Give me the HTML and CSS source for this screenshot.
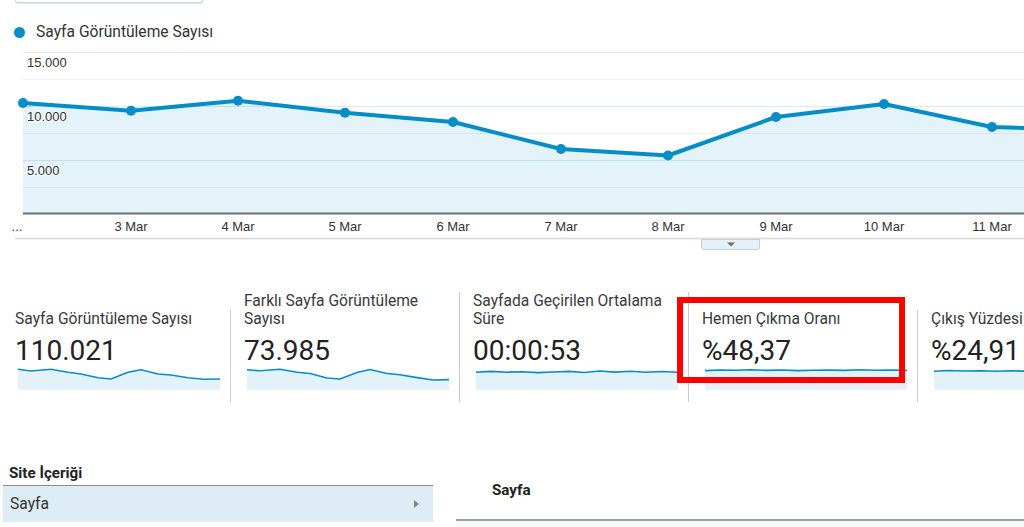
FILE: index.html
```html
<!DOCTYPE html>
<html lang="tr">
<head>
<meta charset="utf-8">
<title>Analytics</title>
<link rel="stylesheet" href="styles.css">
</head>
<body>
<div class="page">
  <div class="topbox"></div>

  <div class="legend">
    <span class="legend-dot"></span>
    <span class="legend-text">Sayfa Görüntüleme Sayısı</span>
  </div>

  <svg class="chart" width="1024" height="206" viewBox="0 44 1024 206" xmlns="http://www.w3.org/2000/svg">
    <g class="grid-major">
      <line x1="23" y1="52.5" x2="1024" y2="52.5"/>
      <line x1="23" y1="106.5" x2="1024" y2="106.5"/>
      <line x1="23" y1="160.5" x2="1024" y2="160.5"/>
    </g>
    <g class="grid-minor">
      <line x1="23" y1="79.5" x2="1024" y2="79.5"/>
      <line x1="23" y1="133.5" x2="1024" y2="133.5"/>
      <line x1="23" y1="187.5" x2="1024" y2="187.5"/>
    </g>
    <polygon class="area" points="23,103 131,110.7 238,100.7 345,112.7 453,122 561,149 668,155.5 776,117 884,104 992,127 1024,128 1024,213 23,213"/>
    <g class="ylabels">
      <text x="27" y="67">15.000</text>
      <text x="27" y="121">10.000</text>
      <text x="27" y="175">5.000</text>
    </g>
    <polyline class="series" points="23,103 131,110.7 238,100.7 345,112.7 453,122 561,149 668,155.5 776,117 884,104 992,127 1024,128"/>
    <g class="dots">
      <circle cx="23" cy="103" r="5"/>
      <circle cx="131" cy="110.7" r="5"/>
      <circle cx="238" cy="100.7" r="5"/>
      <circle cx="345" cy="112.7" r="5"/>
      <circle cx="453" cy="122" r="5"/>
      <circle cx="561" cy="149" r="5"/>
      <circle cx="668" cy="155.5" r="5"/>
      <circle cx="776" cy="117" r="5"/>
      <circle cx="884" cy="104" r="5"/>
      <circle cx="992" cy="127" r="5"/>
    </g>
    <line class="axis" x1="23" y1="213.5" x2="1024" y2="213.5"/>
    <g class="xlabels">
      <text x="17" y="231" text-anchor="start">...</text>
      <text x="131" y="231">3 Mar</text>
      <text x="238" y="231">4 Mar</text>
      <text x="345" y="231">5 Mar</text>
      <text x="453" y="231">6 Mar</text>
      <text x="561" y="231">7 Mar</text>
      <text x="668" y="231">8 Mar</text>
      <text x="776" y="231">9 Mar</text>
      <text x="884" y="231">10 Mar</text>
      <text x="992" y="231">11 Mar</text>
    </g>
    <line class="chart-bottom" x1="15" y1="238.5" x2="1024" y2="238.5"/>
    <path class="tab" d="M701.5,239.5 H759.5 V247 Q759.5,249.5 757,249.5 H704 Q701.5,249.5 701.5,247 Z"/>
    <polygon class="tab-arrow" points="727,242.5 735,242.5 731,246.5"/>
  </svg>

  <div class="metrics">
    <div class="metric">
      <div class="metric-title">Sayfa Görüntüleme Sayısı</div>
      <div class="metric-value">110.021</div>
      <svg class="spark" width="202" height="22" viewBox="0 0 202 22">
        <polygon class="spark-area" points="0,1.3 13,3 33,1.3 50,4.3 63,6 80,9.7 93,11 110,4.3 123,1.7 140,6 153,7 170,9.7 186,11.3 202,11 202,22 0,22"/>
        <polyline class="spark-line" points="0,1.3 13,3 33,1.3 50,4.3 63,6 80,9.7 93,11 110,4.3 123,1.7 140,6 153,7 170,9.7 186,11.3 202,11"/>
      </svg>
    </div>
    <div class="metric">
      <div class="metric-title">Farklı Sayfa Görüntüleme Sayısı</div>
      <div class="metric-value">73.985</div>
      <svg class="spark" width="202" height="22" viewBox="0 0 202 22">
        <polygon class="spark-area" points="0,1.8 13,2.8 33,1.3 50,4.3 63,5.5 80,10 93,11 110,4.5 123,1.5 140,5.5 153,6.8 170,9.6 186,12 202,11.6 202,22 0,22"/>
        <polyline class="spark-line" points="0,1.8 13,2.8 33,1.3 50,4.3 63,5.5 80,10 93,11 110,4.5 123,1.5 140,5.5 153,6.8 170,9.6 186,12 202,11.6"/>
      </svg>
    </div>
    <div class="metric">
      <div class="metric-title">Sayfada Geçirilen Ortalama Süre</div>
      <div class="metric-value">00:00:53</div>
      <svg class="spark" width="202" height="22" viewBox="0 0 202 22">
        <polygon class="spark-area" points="0,4.3 15,3.4 31,4.2 46,3.8 62,4.6 77,4 93,3.4 108,4.5 124,3 139,4.1 155,3.3 170,4.3 186,3.5 202,4.2 202,22 0,22"/>
        <polyline class="spark-line" points="0,4.3 15,3.4 31,4.2 46,3.8 62,4.6 77,4 93,3.4 108,4.5 124,3 139,4.1 155,3.3 170,4.3 186,3.5 202,4.2"/>
      </svg>
    </div>
    <div class="metric">
      <div class="metric-title">Hemen Çıkma Oranı</div>
      <div class="metric-value">%48,37</div>
      <svg class="spark" width="202" height="22" viewBox="0 0 202 22">
        <polygon class="spark-area" points="0,2.6 15,2 31,2.3 46,1.8 62,2.4 77,2 93,2.6 108,2.2 124,2 139,2.4 155,1.8 170,2.2 186,2 202,2.4 202,22 0,22"/>
        <polyline class="spark-line" points="0,2.6 15,2 31,2.3 46,1.8 62,2.4 77,2 93,2.6 108,2.2 124,2 139,2.4 155,1.8 170,2.2 186,2 202,2.4"/>
      </svg>
    </div>
    <div class="metric">
      <div class="metric-title">Çıkış Yüzdesi</div>
      <div class="metric-value">%24,91</div>
      <svg class="spark" width="202" height="22" viewBox="0 0 202 22">
        <polygon class="spark-area" points="0,3.2 15,2.5 31,3 46,2.7 62,3.3 77,2.8 93,3.2 108,2.6 124,3.1 139,2.7 155,3.2 170,2.8 186,3.1 202,2.8 202,22 0,22"/>
        <polyline class="spark-line" points="0,3.2 15,2.5 31,3 46,2.7 62,3.3 77,2.8 93,3.2 108,2.6 124,3.1 139,2.7 155,3.2 170,2.8 186,3.1 202,2.8"/>
      </svg>
    </div>
  </div>

  <div class="highlight"></div>

  <div class="content">
    <div class="dims">
      <div class="dims-title">Site İçeriği</div>
      <div class="dims-row">
        <span>Sayfa</span>
        <span class="row-arrow"></span>
      </div>
    </div>
    <div class="table">
      <div class="table-head">Sayfa</div>
      <div class="table-body"></div>
    </div>
  </div>
</div>
</body>
</html>
```

FILE: styles.css
```css
html, body {
  margin: 0;
  padding: 0;
  background: #ffffff;
}

.page {
  position: relative;
  width: 1024px;
  height: 527px;
  overflow: hidden;
  font-family: Roboto, "Liberation Sans", Arial, sans-serif;
  color: #333333;
}

.topbox {
  margin-left: 15px;
  width: 186px;
  height: 2px;
  border: 1px solid #c9d5dd;
  border-top: none;
  border-radius: 0 0 4px 4px;
  box-shadow: 0 1px 1px rgba(180, 200, 212, 0.5);
}

.legend {
  display: flex;
  align-items: center;
  margin-top: 20px;
  padding-left: 14px;
  height: 18px;
  gap: 11px;
}

.legend-dot {
  width: 11px;
  height: 11px;
  border-radius: 50%;
  background: #058dc7;
}

.legend-text {
  font-size: 15.6px;
  line-height: 18px;
  color: #333333;
}

.chart {
  display: block;
  margin-top: 3px;
}

.grid-major line {
  stroke: #dde8ef;
  stroke-width: 1;
}

.grid-minor line {
  stroke: #eef2f5;
  stroke-width: 1;
}

.area {
  fill: #058dc7;
  fill-opacity: 0.11;
}

.series {
  fill: none;
  stroke: #058dc7;
  stroke-width: 4;
  stroke-linejoin: round;
}

.dots circle {
  fill: #058dc7;
}

.axis {
  stroke: #6f6f6f;
  stroke-width: 2;
}

.ylabels text {
  font-family: "Liberation Sans", Arial, sans-serif;
  font-size: 13px;
  fill: #333333;
  stroke: #ffffff;
  stroke-width: 2px;
  stroke-opacity: 0.6;
  paint-order: stroke;
}

.xlabels text {
  font-family: "Liberation Sans", Arial, sans-serif;
  font-size: 13px;
  fill: #333333;
  text-anchor: middle;
}

.chart-bottom {
  stroke: #e0e0e0;
  stroke-width: 2;
}

.tab {
  fill: #e4f1f8;
  stroke: #c3ced5;
  stroke-width: 1;
}

.tab-arrow {
  fill: #7a6b5c;
}

.metrics {
  display: flex;
  align-items: flex-end;
  margin-top: 42px;
  padding-left: 2px;
}

.metric {
  flex: 0 0 229px;
  width: 229px;
  min-width: 0;
  box-sizing: border-box;
  padding: 0 7px 12px 13px;
  border-right: 1px solid #cccccc;
}

.metric-title {
  font-size: 15.6px;
  line-height: 18px;
  color: #3a3a3a;
}

.metric-value {
  margin-top: 6px;
  font-size: 28px;
  line-height: 34px;
  color: #222222;
}

.spark {
  display: block;
  margin-left: 3px;
}

.spark-area {
  fill: #e3f1f9;
}

.spark-line {
  fill: none;
  stroke: #058dc7;
  stroke-width: 1.6;
}

.highlight {
  position: absolute;
  left: 677px;
  top: 297px;
  width: 228px;
  height: 86px;
  box-sizing: border-box;
  border: 6px solid #ff0000;
}

.content {
  display: flex;
  align-items: flex-start;
  margin-top: 62px;
  padding-left: 3px;
}

.dims {
  flex: 0 0 430px;
}

.dims-title {
  padding: 0 0 3px 6px;
  font-size: 15.2px;
  line-height: 18px;
  font-weight: 700;
  color: #222222;
  border-bottom: 1px solid #8c8c8c;
}

.dims-row {
  display: flex;
  align-items: center;
  justify-content: space-between;
  height: 36px;
  padding: 0 14px 0 7px;
  background: #deedf5;
  font-size: 15.6px;
  color: #333333;
}

.row-arrow {
  width: 0;
  height: 0;
  border-top: 4px solid transparent;
  border-bottom: 4px solid transparent;
  border-left: 5px solid #888888;
}

.table {
  flex: 1 1 auto;
  margin-left: 23px;
}

.table-head {
  padding: 17px 0 20px 36px;
  font-size: 15.2px;
  line-height: 18px;
  font-weight: 700;
  color: #222222;
  border-bottom: 2px solid #a0a0a0;
}

.table-body {
  height: 20px;
  background: #f5f9fa;
}
```
